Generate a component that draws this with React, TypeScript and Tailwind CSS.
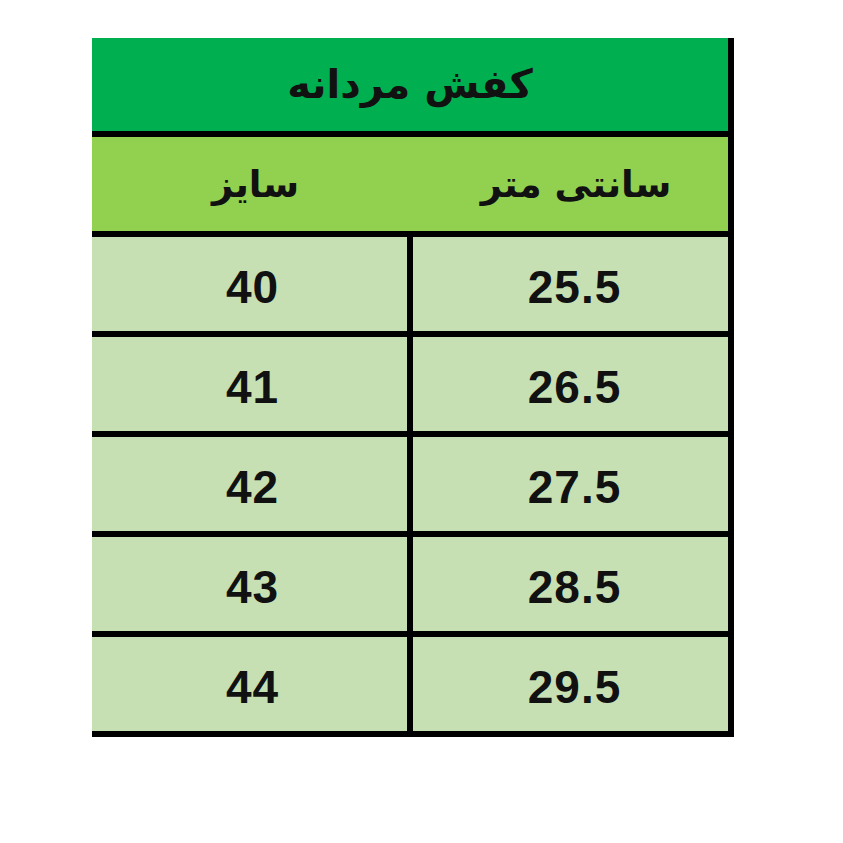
import React from 'react';

const rows = [
  { size: '40', cm: '25.5' },
  { size: '41', cm: '26.5' },
  { size: '42', cm: '27.5' },
  { size: '43', cm: '28.5' },
  { size: '44', cm: '29.5' },
];

const faFont = "font-['DejaVu_Sans',sans-serif]";
const numFont = "font-['Liberation_Sans',Arial,sans-serif]";

export default function App() {
  return (
    <div className="min-h-[843px] w-[843px] bg-white pt-[38px] pl-[92px]">
      <div className="w-[642px] border-r-[6px] border-black bg-[#c6e0b4]">
        {/* title */}
        <div
          dir="rtl"
          className={`flex h-[99px] items-center justify-center border-b-[6px] border-black bg-[#00b050] pb-[2px] text-[40px] font-bold text-[#111] ${faFont}`}
        >
          کفش مردانه
        </div>

        {/* column headers */}
        <div className={`grid h-[100px] grid-cols-2 border-b-[6px] border-black bg-[#92d050] text-[37px] font-bold text-[#111] ${faFont}`}>
          <div dir="rtl" className="flex w-[321px] items-center justify-center pt-[2px] pl-[6px]">
            سایز
          </div>
          <div dir="rtl" className="flex items-center justify-center pt-[2px] pl-[14px]">
            سانتی متر
          </div>
        </div>

        {/* data */}
        {rows.map((r) => (
          <div
            key={r.size}
            className={`grid h-[100px] grid-cols-[321px_1fr] border-b-[6px] border-black text-[46px] font-bold tracking-[1px] text-[#111] ${numFont}`}
          >
            <div className="flex items-center justify-center border-r-[6px] border-black pt-[6px] pl-[6px]">
              {r.size}
            </div>
            <div className="flex items-center justify-center pt-[6px] pl-[8px]">{r.cm}</div>
          </div>
        ))}
      </div>
    </div>
  );
}
